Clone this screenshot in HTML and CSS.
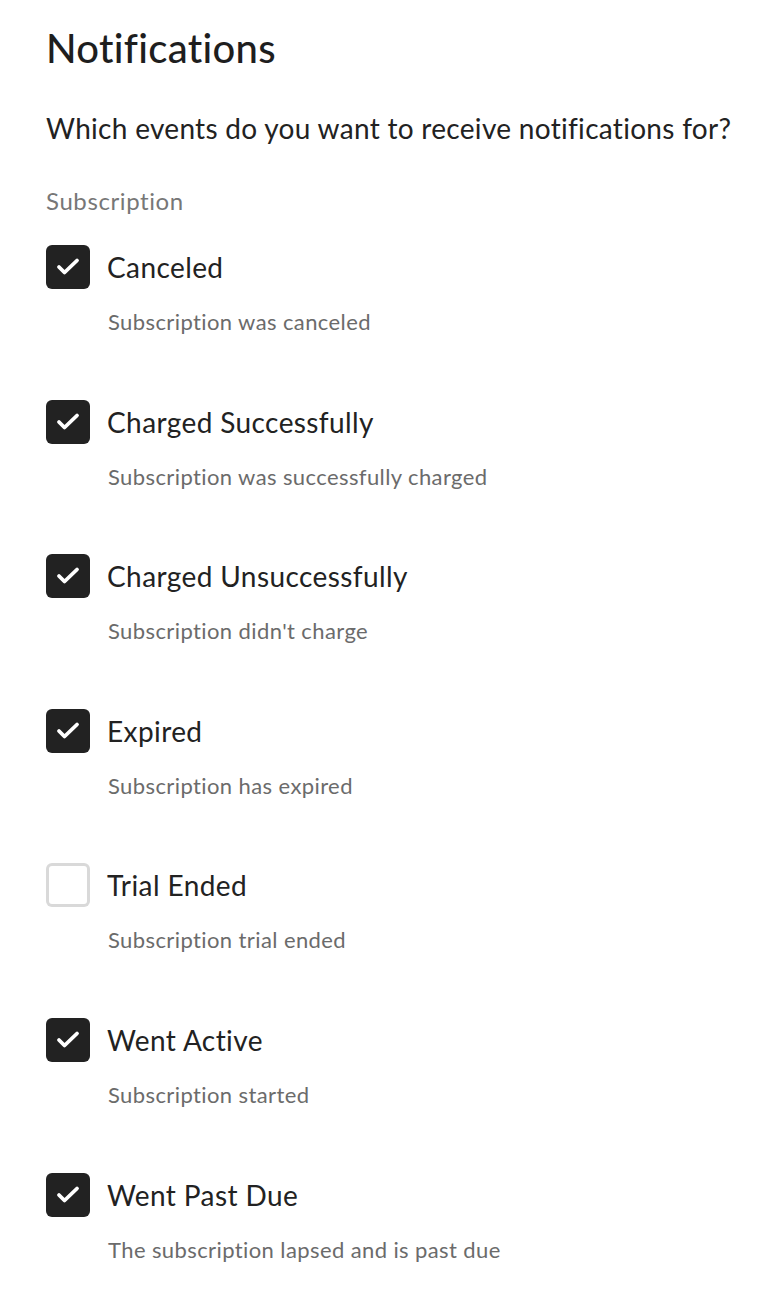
FILE: index.html
```html
<!DOCTYPE html>
<html lang="en">
<head>
    <meta charset="UTF-8">
    <meta name="viewport" content="width=device-width, initial-scale=1.0">
    <title>Notifications</title>
    <link rel="stylesheet" href="styles.css">
</head>
<body>

    <div class="container">
        <!-- Title -->
        <h1 class="title">Notifications</h1>
        <p class="question">Which events do you want to receive notifications for?</p>

        <div class="group-label">Subscription</div>

        <!-- Event list -->
        <div class="event-list">
            <label class="event">
                <span class="event-row">
                    <input type="checkbox" checked>
                    <span class="box"><svg viewBox="0 0 44 44"><path d="M13 22l5.5 5.5 12.5-12"/></svg></span>
                    <span class="event-name">Canceled</span>
                </span>
                <span class="event-desc">Subscription was canceled</span>
            </label>
            <label class="event">
                <span class="event-row">
                    <input type="checkbox" checked>
                    <span class="box"><svg viewBox="0 0 44 44"><path d="M13 22l5.5 5.5 12.5-12"/></svg></span>
                    <span class="event-name">Charged Successfully</span>
                </span>
                <span class="event-desc">Subscription was successfully charged</span>
            </label>
            <label class="event">
                <span class="event-row">
                    <input type="checkbox" checked>
                    <span class="box"><svg viewBox="0 0 44 44"><path d="M13 22l5.5 5.5 12.5-12"/></svg></span>
                    <span class="event-name">Charged Unsuccessfully</span>
                </span>
                <span class="event-desc">Subscription didn't charge</span>
            </label>
            <label class="event">
                <span class="event-row">
                    <input type="checkbox" checked>
                    <span class="box"><svg viewBox="0 0 44 44"><path d="M13 22l5.5 5.5 12.5-12"/></svg></span>
                    <span class="event-name">Expired</span>
                </span>
                <span class="event-desc">Subscription has expired</span>
            </label>
            <label class="event">
                <span class="event-row">
                    <input type="checkbox">
                    <span class="box"><svg viewBox="0 0 44 44"><path d="M13 22l5.5 5.5 12.5-12"/></svg></span>
                    <span class="event-name">Trial Ended</span>
                </span>
                <span class="event-desc">Subscription trial ended</span>
            </label>
            <label class="event">
                <span class="event-row">
                    <input type="checkbox" checked>
                    <span class="box"><svg viewBox="0 0 44 44"><path d="M13 22l5.5 5.5 12.5-12"/></svg></span>
                    <span class="event-name">Went Active</span>
                </span>
                <span class="event-desc">Subscription started</span>
            </label>
            <label class="event">
                <span class="event-row">
                    <input type="checkbox" checked>
                    <span class="box"><svg viewBox="0 0 44 44"><path d="M13 22l5.5 5.5 12.5-12"/></svg></span>
                    <span class="event-name">Went Past Due</span>
                </span>
                <span class="event-desc">The subscription lapsed and is past due</span>
            </label>
        </div>
    </div>

</body>
</html>
```

FILE: styles.css
```css
/* General Reset */
* {
    margin: 0;
    padding: 0;
    box-sizing: border-box;
    font-family: Lato, "Noto Sans", sans-serif;
}

body {
    background-color: #ffffff;
    color: #222222;
}

.container {
    padding: 24px 16px 40px 46px;
}

/* Title */
.title {
    font-size: 40px;
    font-weight: 500;
    line-height: 48px;
    letter-spacing: 0.3px;
    color: #1e1e1e;
}

.question {
    margin-top: 38px;
    font-size: 28px;
    line-height: 36px;
    letter-spacing: 0.3px;
    white-space: nowrap;
    color: #222222;
}

.group-label {
    margin-top: 40px;
    font-size: 24px;
    line-height: 30px;
    letter-spacing: 0.6px;
    color: #777777;
}

/* Event list */
.event-list {
    display: flex;
    flex-direction: column;
    gap: 64.6px;
    margin-top: 29px;
}

.event {
    display: flex;
    flex-direction: column;
    gap: 20px;
    cursor: pointer;
}

.event-row {
    display: flex;
    align-items: center;
    gap: 17px;
}

.event-row input {
    display: none;
}

.box {
    flex: none;
    width: 44px;
    height: 44px;
    border-radius: 6px;
    background-color: #222222;
}

.box svg {
    display: block;
    width: 44px;
    height: 44px;
    fill: none;
    stroke: #ffffff;
    stroke-width: 3.8;
    stroke-linecap: round;
    stroke-linejoin: round;
}

.event-row input:not(:checked) + .box {
    background-color: #ffffff;
    box-shadow: inset 0 0 0 3px #d9d9d9;
}

.event-row input:not(:checked) + .box svg {
    display: none;
}

.event-name {
    font-size: 28px;
    line-height: 34px;
    letter-spacing: 0.4px;
    color: #222222;
}

.event-desc {
    padding-left: 62px;
    font-size: 22px;
    line-height: 26px;
    letter-spacing: 0.4px;
    color: #6b6b6b;
}
```
